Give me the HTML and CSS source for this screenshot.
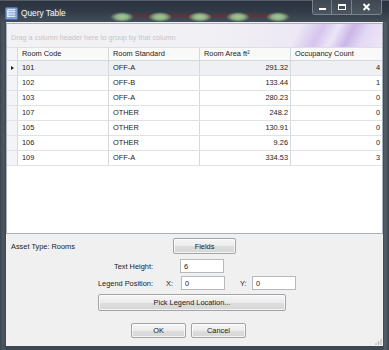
FILE: index.html
```html
<!DOCTYPE html>
<html>
<head>
<meta charset="utf-8">
<link rel="stylesheet" href="styles.css">
</head>
<body>
<div class="window">
  <div class="titlebar">
    <svg class="appicon" width="13" height="13" viewBox="0 0 14 14">
      <rect x="0.5" y="0.5" width="13" height="13" rx="1.5" fill="#7d9fd6" stroke="#4d6fae"/>
      <path d="M3 3h8M3 3v8M5 5h6M5 7.5h6M5 10h6M3 5h2M3 7.5h2M3 10h2" stroke="#ffffff" stroke-width="1.1" fill="none"/>
    </svg>
    <span class="title">Query Table</span>
    <div class="controls">
      <div class="ctl min"><span class="minbar"></span></div>
      <div class="ctl max"><span class="maxbox"></span></div>
      <div class="ctl close">
        <svg width="9" height="8" viewBox="0 0 9 8"><path d="M1.5 1l6 6M7.5 1l-6 6" stroke="#ffffff" stroke-width="1.8"/></svg>
      </div>
    </div>
  </div>
  <div class="client">
    <div class="grid">
      <div class="grouppanel">Drag a column header here to group by that column</div>
      <div class="row header">
        <div class="ind"></div>
        <div class="cell">Room Code</div>
        <div class="cell">Room Standard</div>
        <div class="cell">Room Area ft²</div>
        <div class="cell last">Occupancy Count</div>
      </div>
      <div class="row sel">
        <div class="ind"><span class="arrow"></span></div>
        <div class="cell">101</div><div class="cell">OFF-A</div><div class="cell num">291.32</div><div class="cell num last">4</div>
      </div>
      <div class="row">
        <div class="ind"></div>
        <div class="cell">102</div><div class="cell">OFF-B</div><div class="cell num">133.44</div><div class="cell num last">1</div>
      </div>
      <div class="row">
        <div class="ind"></div>
        <div class="cell">103</div><div class="cell">OFF-A</div><div class="cell num">280.23</div><div class="cell num last">0</div>
      </div>
      <div class="row">
        <div class="ind"></div>
        <div class="cell">107</div><div class="cell">OTHER</div><div class="cell num">248.2</div><div class="cell num last">0</div>
      </div>
      <div class="row">
        <div class="ind"></div>
        <div class="cell">105</div><div class="cell">OTHER</div><div class="cell num">130.91</div><div class="cell num last">0</div>
      </div>
      <div class="row">
        <div class="ind"></div>
        <div class="cell">106</div><div class="cell">OTHER</div><div class="cell num">9.26</div><div class="cell num last">0</div>
      </div>
      <div class="row">
        <div class="ind"></div>
        <div class="cell">109</div><div class="cell">OFF-A</div><div class="cell num">334.53</div><div class="cell num last">3</div>
      </div>
      <div class="empty"></div>
    </div>
    <div class="panel">
      <div class="prow rowa">
        <span class="asset">Asset Type: Rooms</span>
        <button class="btn fields">Fields</button>
      </div>
      <div class="prow rowb">
        <span class="lbl">Text Height:</span>
        <input class="txt th" value="6">
      </div>
      <div class="prow rowc">
        <span class="lbl">Legend Position:</span>
        <span class="axis">X:</span>
        <input class="txt xv" value="0">
        <span class="axis ay">Y:</span>
        <input class="txt yv" value="0">
      </div>
      <div class="prow rowd">
        <button class="btn pick">Pick Legend Location...</button>
      </div>
      <div class="prow rowe">
        <button class="btn ok">OK</button>
        <button class="btn cancel">Cancel</button>
      </div>
      <div class="grip">
        <svg width="7" height="7" viewBox="0 0 7 7"><path d="M1 7V5M3.5 7V3M6 7V1" stroke="#b8b8b8" stroke-width="1.2"/></svg>
      </div>
    </div>
  </div>
</div>
</body>
</html>
```

FILE: styles.css
```css
* { box-sizing: border-box; }
html, body { margin: 0; padding: 0; }
body {
  width: 389px;
  height: 350px;
  overflow: hidden;
  background: #2c3540;
  font-family: "Liberation Sans", Arial, sans-serif;
  font-size: 7.4px;
  color: #1a1a1a;
}
.window {
  width: 389px;
  height: 350px;
  display: flex;
  flex-direction: column;
  background: linear-gradient(90deg, #3a4450 0, #4d5862 3px, #3d4750 6px, #3d4750 383px, #56606a 385px, #3a4450 389px);
}
.titlebar {
  height: 22px;
  flex: none;
  display: flex;
  align-items: flex-start;
  padding-left: 5px;
  border-top: 1px solid #555e68;
  background:
    radial-gradient(ellipse 12px 5px at 122px 16px, #a2c894 0, rgba(156,196,142,0.85) 50%, rgba(156,196,142,0) 100%),
    radial-gradient(ellipse 12px 5px at 160px 16px, #a2c894 0, rgba(156,196,142,0.85) 50%, rgba(156,196,142,0) 100%),
    radial-gradient(ellipse 12px 5px at 200px 16px, #aad09a 0, rgba(156,196,142,0.85) 50%, rgba(156,196,142,0) 100%),
    radial-gradient(ellipse 12px 5px at 238px 16px, #a2c894 0, rgba(156,196,142,0.85) 50%, rgba(156,196,142,0) 100%),
    radial-gradient(ellipse 12px 5px at 278px 16px, #a2c894 0, rgba(156,196,142,0.85) 50%, rgba(156,196,142,0) 100%),
    linear-gradient(90deg, rgba(0,0,0,0) 128px, rgba(120,40,45,0.6) 138px, rgba(120,40,45,0.6) 272px, rgba(0,0,0,0) 278px) 0 13px / 100% 3px no-repeat,
    linear-gradient(180deg, #2b3440 0, #313b47 10px, #45505b 22px);
}
.appicon { margin-top: 6px; flex: none; }
.title {
  margin-left: 3px;
  margin-top: 7px;
  font-size: 8.3px;
  color: #f2f4f6;
  text-shadow: 0 0 3px rgba(255,255,255,0.25);
}
.controls {
  margin-left: auto;
  margin-right: 7px;
  display: flex;
  height: 15px;
  margin-top: -1px;
  border: 1px solid rgba(180,190,200,0.55);
  border-top: none;
  border-radius: 0 0 3px 3px;
  overflow: hidden;
}
.ctl {
  height: 14px;
  display: flex;
  align-items: center;
  justify-content: center;
  background: linear-gradient(180deg, #3f4852, #4c5660);
}
.min { width: 19px; border-right: 1px solid rgba(180,190,200,0.45); }
.max { width: 20px; border-right: 1px solid rgba(180,190,200,0.45); }
.close { width: 29px; }
.minbar { width: 7px; height: 2px; background: #fff; margin-top: 4px; }
.maxbox { width: 8px; height: 6px; border: 1px solid #fff; border-top-width: 2px; }
.client {
  margin: 0 6px;
  height: 324px;
  flex: none;
  background: #f0f0f0;
  display: flex;
  flex-direction: column;
  padding-top: 1px;
}
.grid {
  height: 211px;
  border: 1px solid #a9b1ba;
  background: #ffffff;
  display: flex;
  flex-direction: column;
}
.grouppanel {
  height: 24px;
  flex: none;
  padding: 9px 0 0 4px;
  color: #c3c5c9;
  font-size: 7.2px;
  background:
    linear-gradient(118deg, rgba(255,255,255,0) 76%, rgba(206,186,234,0.75) 82%, rgba(238,230,250,0.5) 86%, rgba(196,174,230,0.85) 90%, rgba(226,214,246,0.7) 94%, rgba(240,234,250,0.6) 100%),
    linear-gradient(90deg, #f2f2f4 0, #f1f0f5 55%, #e9e0f4 100%);
  border-bottom: 1px solid #dcdfe4;
}
.row {
  display: flex;
  height: 15px;
  flex: none;
  border-bottom: 1px solid #dfe3e8;
}
.row.header { height: 13px; background: #f9f9fa; border-bottom: 1px solid #d5d9de; }
.row.header .cell { line-height: 12px; }
.row.sel { background: #eef0f3; }
.ind {
  width: 11px;
  flex: none;
  border-right: 1px solid #d5d9de;
  background: #f3f4f6;
  display: flex;
  align-items: center;
  justify-content: center;
}
.arrow {
  width: 0; height: 0;
  border-top: 2.5px solid transparent;
  border-bottom: 2.5px solid transparent;
  border-left: 3px solid #1e1e1e;
}
.cell {
  width: 91px;
  flex: none;
  border-right: 1px solid #d5d9de;
  padding: 0 4px;
  line-height: 14px;
  white-space: nowrap;
}
.cell.last { border-right: none; flex: 1; width: auto; }
.cell.num { text-align: right; padding-right: 2px; }
.empty { flex: 1; background: #fff; }
.panel {
  position: relative;
  flex: 1;
  padding-top: 4px;
  display: flex;
  flex-direction: column;
}
.prow { display: flex; align-items: center; }
.rowa { height: 16px; padding-left: 5px; }
.asset { width: 162px; }
.btn {
  font-family: "Liberation Sans", Arial, sans-serif;
  font-size: 7.4px;
  color: #1a1a1a;
  padding: 0;
  border: 1px solid #a2a4a8;
  border-radius: 2px;
  background: linear-gradient(180deg, #f6f6f6 0, #ebebeb 50%, #dddddd 51%, #d6d6d6 100%);
  box-shadow: inset 0 0 0 1px rgba(255,255,255,0.7);
}
.fields { width: 63px; height: 16px; }
.rowb { height: 14px; margin-top: 5px; }
.lbl { width: 147px; text-align: right; flex: none; }
.txt {
  font-family: "Liberation Sans", Arial, sans-serif;
  font-size: 7.4px;
  color: #1a1a1a;
  height: 14px;
  border: 1px solid #b6b9be;
  background: #fff;
  padding: 0 0 0 3px;
  outline: none;
}
.th { width: 44px; margin-left: 27px; }
.rowc { height: 14px; margin-top: 3px; }
.axis { margin-left: 13px; width: 15px; flex: none; }
.xv { width: 44px; }
.ay { margin-left: 15px; width: 12px; }
.yv { width: 44px; }
.rowd { height: 17px; margin-top: 4px; padding-left: 92px; }
.pick { width: 188px; height: 17px; }
.rowe { height: 15px; margin-top: 12px; padding-left: 125px; gap: 5px; }
.ok, .cancel { width: 55px; height: 15px; }
.grip { position: absolute; right: 1px; bottom: 1px; line-height: 0; }
```
